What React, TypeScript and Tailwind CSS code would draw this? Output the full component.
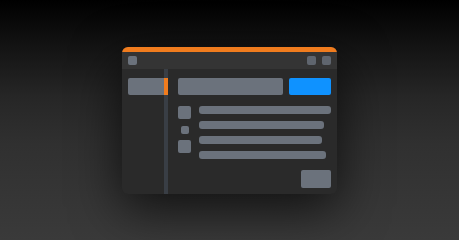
import React from 'react'

/**
 * Wireframe-style app window mockup on a dark vertical gradient.
 * Orange accent strip on top, title bar with three squares,
 * sidebar with active item, search + blue button, list rows, footer button.
 */
const rows = [
  { bar: 'w-[132px]' },
  { bar: 'w-[125px]' },
  { bar: 'w-[123px]' },
  { bar: 'w-[127px]' },
]

export default function App() {
  return (
    <div className="w-[459px] h-[240px] flex items-center justify-center bg-[linear-gradient(to_bottom,#000000_0%,#121212_18%,#262626_40%,#303030_60%,#3a3a3a_100%)] font-['Liberation_Sans',sans-serif]">
      <div className="w-[215px] h-[147px] flex flex-col rounded-[6px] overflow-hidden bg-[#2a2a2a] shadow-[0_14px_50px_rgba(0,0,0,0.7)]">
        {/* Accent strip */}
        <div className="h-[5px] bg-[#f07c1e]" />

        {/* Title bar */}
        <div className="h-[17px] flex items-center justify-between px-1.5 bg-[#343434]">
          <div className="w-[9px] h-[9px] rounded-[2px] bg-[#6b727c]" />
          <div className="flex gap-1.5">
            <div className="w-[9px] h-[9px] rounded-[2px] bg-[#5f656e]" />
            <div className="w-[9px] h-[9px] rounded-[2px] bg-[#5f656e]" />
          </div>
        </div>

        {/* Body */}
        <div className="flex-1 flex">
          {/* Sidebar */}
          <div className="w-[42px] pt-[9px] pl-1.5">
            <div className="h-[17px] rounded-l-[2px] bg-[#6b727c]" />
          </div>
          <div className="w-[4px] bg-[#393e45] pt-[9px]">
            <div className="h-[17px] bg-[#f07c1e]" />
          </div>

          {/* Main */}
          <div className="flex-1 flex flex-col pt-[9px] pl-[10px] pr-1.5 pb-1.5">
            <div className="flex gap-1.5 h-[17px]">
              <div className="flex-1 rounded-[2px] bg-[#6b727c]" />
              <div className="w-[42px] rounded-[2px] bg-[#0f92ff]" />
            </div>

            <div className="flex gap-2 mt-[11px]">
              <div className="w-[13px] flex flex-col items-center">
                <div className="w-[13px] h-[13px] rounded-[2px] bg-[#6b727c]" />
                <div className="w-[8px] h-[8px] mt-[7px] rounded-[2px] bg-[#6b727c]" />
                <div className="w-[13px] h-[13px] mt-[6px] rounded-[2px] bg-[#6b727c]" />
              </div>
              <div className="flex flex-col gap-[7px]">
                {rows.map((r, i) => (
                  <div key={i} className={`${r.bar} h-[8px] rounded-[3px] bg-[#6b727c]`} />
                ))}
              </div>
            </div>

            <div className="mt-auto flex justify-end">
              <div className="w-[30px] h-[18px] rounded-[2px] bg-[#6b727c]" />
            </div>
          </div>
        </div>
      </div>
    </div>
  )
}
